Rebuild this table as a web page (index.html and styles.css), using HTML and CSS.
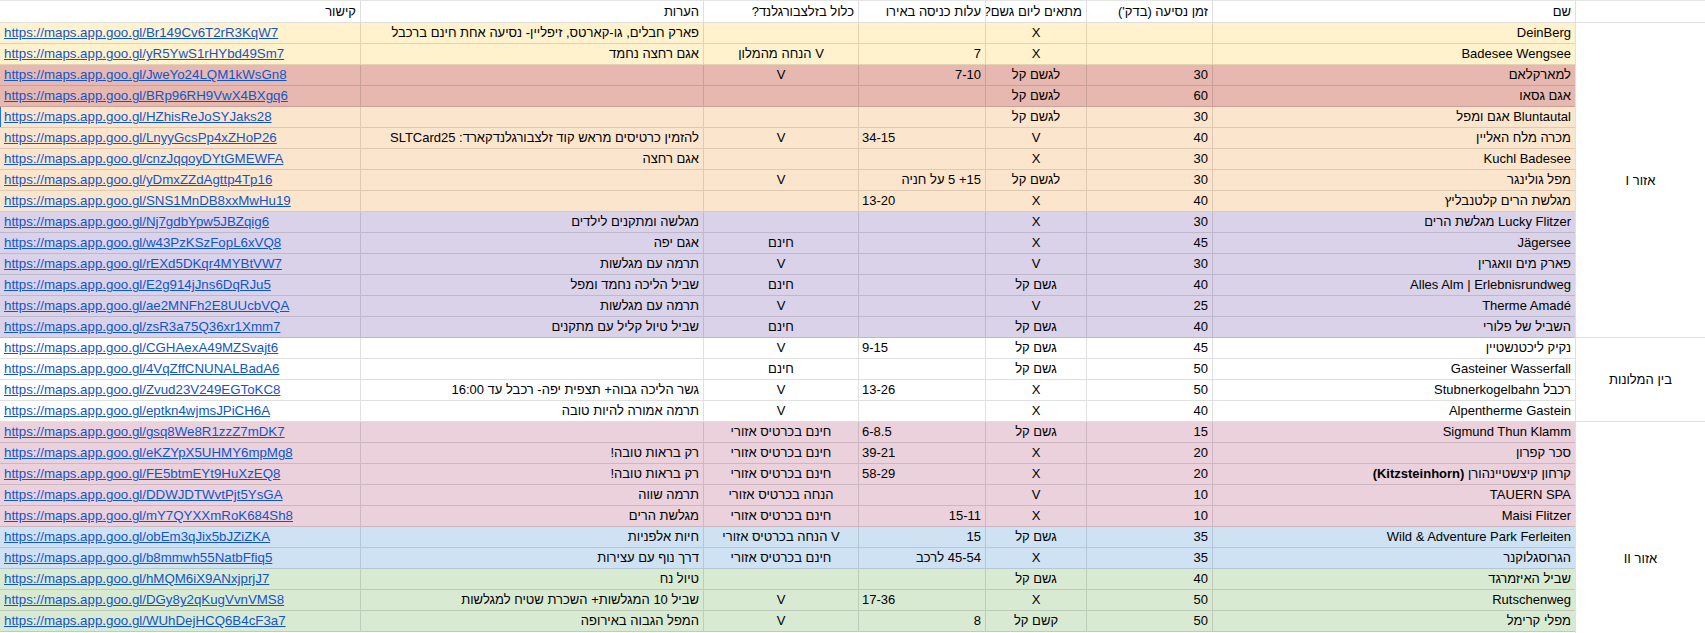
FILE: index.html
```html
<!DOCTYPE html>
<html lang="he" dir="rtl">
<head>
<meta charset="utf-8">
<title>אטרקציות</title>
<link rel="stylesheet" href="styles.css">
</head>
<body>
<div class="sheet">
  <div class="row head">
    <div class="c"></div>
    <div class="c">שם</div>
    <div class="c">זמן נסיעה (בדק')</div>
    <div class="c">מתאים ליום גשם?</div>
    <div class="c">עלות כניסה באירו</div>
    <div class="c">כלול בזלצבורגלנד?</div>
    <div class="c">הערות</div>
    <div class="c lk-h">קישור</div>
  </div>

  <div class="g span15">אזור I</div>
  <div class="row yellow">
    <div class="c">DeinBerg</div><div class="c"></div><div class="c ctr">X</div><div class="c"></div><div class="c ctr"></div><div class="c">פארק חבלים, גו-קארטס, זיפליין- נסיעה אחת חינם ברכבל</div><div class="c lk"><a href="#">https://maps.app.goo.gl/Br149Cv6T2rR3KqW7</a></div>
  </div>
  <div class="row yellow">
    <div class="c">Badesee Wengsee</div><div class="c"></div><div class="c ctr">X</div><div class="c">7</div><div class="c ctr">V הנחה מהמלון</div><div class="c">אגם רחצה נחמד</div><div class="c lk"><a href="#">https://maps.app.goo.gl/yR5YwS1rHYbd49Sm7</a></div>
  </div>
  <div class="row red">
    <div class="c">למארקלאם</div><div class="c">30</div><div class="c ctr">לגשם קל</div><div class="c">7-10</div><div class="c ctr">V</div><div class="c"></div><div class="c lk"><a href="#">https://maps.app.goo.gl/JweYo24LQM1kWsGn8</a></div>
  </div>
  <div class="row red">
    <div class="c">אגם גסאו</div><div class="c">60</div><div class="c ctr">לגשם קל</div><div class="c"></div><div class="c ctr"></div><div class="c"></div><div class="c lk"><a href="#">https://maps.app.goo.gl/BRp96RH9VwX4BXgq6</a></div>
  </div>
  <div class="row peach">
    <div class="c">Bluntautal אגם ומפל</div><div class="c">30</div><div class="c ctr">לגשם קל</div><div class="c"></div><div class="c ctr"></div><div class="c"></div><div class="c lk sel"><a href="#">https://maps.app.goo.gl/HZhisReJoSYJaks28</a></div>
  </div>
  <div class="row peach">
    <div class="c">מכרה מלח האליין</div><div class="c">40</div><div class="c ctr">V</div><div class="c l">34-15</div><div class="c ctr">V</div><div class="c">להזמין כרטיסים מראש קוד זלצבורגלנדקארד: SLTCard25</div><div class="c lk"><a href="#">https://maps.app.goo.gl/LnyyGcsPp4xZHoP26</a></div>
  </div>
  <div class="row peach">
    <div class="c">Kuchl Badesee</div><div class="c">30</div><div class="c ctr">X</div><div class="c"></div><div class="c ctr"></div><div class="c">אגם רחצה</div><div class="c lk"><a href="#">https://maps.app.goo.gl/cnzJqqoyDYtGMEWFA</a></div>
  </div>
  <div class="row peach">
    <div class="c">מפל גולינגר</div><div class="c">30</div><div class="c ctr">לגשם קל</div><div class="c">15+ 5 על חניה</div><div class="c ctr">V</div><div class="c"></div><div class="c lk"><a href="#">https://maps.app.goo.gl/yDmxZZdAgttp4Tp16</a></div>
  </div>
  <div class="row peach">
    <div class="c">מגלשת הרים קלטנבליץ</div><div class="c">40</div><div class="c ctr">X</div><div class="c l">13-20</div><div class="c ctr"></div><div class="c"></div><div class="c lk"><a href="#">https://maps.app.goo.gl/SNS1MnDB8xxMwHu19</a></div>
  </div>
  <div class="row purple">
    <div class="c">Lucky Flitzer מגלשת הרים</div><div class="c">30</div><div class="c ctr">X</div><div class="c"></div><div class="c ctr"></div><div class="c">מגלשה ומתקנים לילדים</div><div class="c lk"><a href="#">https://maps.app.goo.gl/Nj7gdbYpw5JBZqig6</a></div>
  </div>
  <div class="row purple">
    <div class="c">Jägersee</div><div class="c">45</div><div class="c ctr">X</div><div class="c"></div><div class="c ctr">חינם</div><div class="c">אגם יפה</div><div class="c lk"><a href="#">https://maps.app.goo.gl/w43PzKSzFopL6xVQ8</a></div>
  </div>
  <div class="row purple">
    <div class="c">פארק מים וואגרין</div><div class="c">30</div><div class="c ctr">V</div><div class="c"></div><div class="c ctr">V</div><div class="c">תרמה עם מגלשות</div><div class="c lk"><a href="#">https://maps.app.goo.gl/rEXd5DKqr4MYBtVW7</a></div>
  </div>
  <div class="row purple">
    <div class="c">Alles Alm | Erlebnisrundweg</div><div class="c">40</div><div class="c ctr">גשם קל</div><div class="c"></div><div class="c ctr">חינם</div><div class="c">שביל הליכה נחמד ומפל</div><div class="c lk"><a href="#">https://maps.app.goo.gl/E2g914jJns6DqRJu5</a></div>
  </div>
  <div class="row purple">
    <div class="c">Therme Amadé</div><div class="c">25</div><div class="c ctr">V</div><div class="c"></div><div class="c ctr">V</div><div class="c">תרמה עם מגלשות</div><div class="c lk"><a href="#">https://maps.app.goo.gl/ae2MNFh2E8UUcbVQA</a></div>
  </div>
  <div class="row purple">
    <div class="c">השביל של פלורי</div><div class="c">40</div><div class="c ctr">גשם קל</div><div class="c"></div><div class="c ctr">חינם</div><div class="c">שביל טיול קליל עם מתקנים</div><div class="c lk"><a href="#">https://maps.app.goo.gl/zsR3a75Q36xr1Xmm7</a></div>
  </div>

  <div class="g span4">בין המלונות</div>
  <div class="row white">
    <div class="c">נקיק ליכטנשטיין</div><div class="c">45</div><div class="c ctr">גשם קל</div><div class="c l">9-15</div><div class="c ctr">V</div><div class="c"></div><div class="c lk"><a href="#">https://maps.app.goo.gl/CGHAexA49MZSvajt6</a></div>
  </div>
  <div class="row white">
    <div class="c">Gasteiner Wasserfall</div><div class="c">50</div><div class="c ctr">גשם קל</div><div class="c"></div><div class="c ctr">חינם</div><div class="c"></div><div class="c lk"><a href="#">https://maps.app.goo.gl/4VqZffCNUNALBadA6</a></div>
  </div>
  <div class="row white">
    <div class="c">רכבל Stubnerkogelbahn</div><div class="c">50</div><div class="c ctr">X</div><div class="c l">13-26</div><div class="c ctr">V</div><div class="c">גשר הליכה גבוה+ תצפית יפה- רכבל עד 16:00</div><div class="c lk"><a href="#">https://maps.app.goo.gl/Zvud23V249EGToKC8</a></div>
  </div>
  <div class="row white">
    <div class="c">Alpentherme Gastein</div><div class="c">40</div><div class="c ctr">X</div><div class="c"></div><div class="c ctr">V</div><div class="c">תרמה אמורה להיות טובה</div><div class="c lk"><a href="#">https://maps.app.goo.gl/eptkn4wjmsJPiCH6A</a></div>
  </div>

  <div class="g span13">אזור II</div>
  <div class="row pink">
    <div class="c">Sigmund Thun Klamm</div><div class="c">15</div><div class="c ctr">גשם קל</div><div class="c l">6-8.5</div><div class="c ctr">חינם בכרטיס אזורי</div><div class="c"></div><div class="c lk"><a href="#">https://maps.app.goo.gl/gsq8We8R1zzZ7mDK7</a></div>
  </div>
  <div class="row pink">
    <div class="c">סכר קפרון</div><div class="c">20</div><div class="c ctr">X</div><div class="c l">39-21</div><div class="c ctr">חינם בכרטיס אזורי</div><div class="c">רק בראות טובה!</div><div class="c lk"><a href="#">https://maps.app.goo.gl/eKZYpX5UHMY6mpMg8</a></div>
  </div>
  <div class="row pink">
    <div class="c">קרחון קיצשטיינהורן <b>(Kitzsteinhorn)</b></div><div class="c">20</div><div class="c ctr">X</div><div class="c l">58-29</div><div class="c ctr">חינם בכרטיס אזורי</div><div class="c">רק בראות טובה!</div><div class="c lk"><a href="#">https://maps.app.goo.gl/FE5btmEYt9HuXzEQ8</a></div>
  </div>
  <div class="row pink">
    <div class="c">TAUERN SPA</div><div class="c">10</div><div class="c ctr">V</div><div class="c"></div><div class="c ctr">הנחה בכרטיס אזורי</div><div class="c">תרמה שווה</div><div class="c lk"><a href="#">https://maps.app.goo.gl/DDWJDTWvtPjt5YsGA</a></div>
  </div>
  <div class="row pink">
    <div class="c">Maisi Flitzer</div><div class="c">10</div><div class="c ctr">X</div><div class="c">15-11</div><div class="c ctr">חינם בכרטיס אזורי</div><div class="c">מגלשת הרים</div><div class="c lk"><a href="#">https://maps.app.goo.gl/mY7QYXXmRoK684Sh8</a></div>
  </div>
  <div class="row blue">
    <div class="c">Wild &amp; Adventure Park Ferleiten</div><div class="c">35</div><div class="c ctr">גשם קל</div><div class="c">15</div><div class="c ctr">V הנחה בכרטיס אזורי</div><div class="c">חיות אלפניות</div><div class="c lk"><a href="#">https://maps.app.goo.gl/obEm3qJix5bJZiZKA</a></div>
  </div>
  <div class="row blue">
    <div class="c">הגרוסגלוקנר</div><div class="c">35</div><div class="c ctr">X</div><div class="c">45-54 לרכב</div><div class="c ctr">חינם בכרטיס אזורי</div><div class="c">דרך נוף עם עצירות</div><div class="c lk"><a href="#">https://maps.app.goo.gl/b8mmwh55NatbFfiq5</a></div>
  </div>
  <div class="row green">
    <div class="c">שביל האיזמרגד</div><div class="c">40</div><div class="c ctr">גשם קל</div><div class="c"></div><div class="c ctr"></div><div class="c">טיול נח</div><div class="c lk"><a href="#">https://maps.app.goo.gl/hMQM6iX9ANxjprjJ7</a></div>
  </div>
  <div class="row green">
    <div class="c">Rutschenweg</div><div class="c">50</div><div class="c ctr">X</div><div class="c l">17-36</div><div class="c ctr">V</div><div class="c">שביל 10 המגלשות+ השכרת שטיח למגלשות</div><div class="c lk"><a href="#">https://maps.app.goo.gl/DGy8y2qKugVvnVMS8</a></div>
  </div>
  <div class="row green">
    <div class="c">מפלי קרימל</div><div class="c">50</div><div class="c ctr">קשם קל</div><div class="c">8</div><div class="c ctr">V</div><div class="c">המפל הגבוה באירופה</div><div class="c lk"><a href="#">https://maps.app.goo.gl/WUhDejHCQ6B4cF3a7</a></div>
  </div>
</div>
</body>
</html>
```

FILE: styles.css
```css
html, body {
  margin: 0;
  padding: 0;
  background: #ffffff;
}

body {
  font-family: "Liberation Sans", Arial, sans-serif;
  font-size: 13px;
  color: #000000;
  overflow: hidden;
}

.sheet {
  direction: rtl;
  display: grid;
  grid-template-columns: 130px 363px 126px 101px 127px 155px 343px 360px;
  grid-template-rows: 23px;
  grid-auto-rows: 21px;
  height: 633px;
  overflow: hidden;
}

.row {
  display: contents;
}

.c {
  box-sizing: border-box;
  min-width: 0;
  padding: 0 4px;
  line-height: 20px;
  white-space: nowrap;
  overflow: hidden;
  text-align: right;
  border-bottom: 1px solid rgba(0, 0, 0, 0.12);
  border-left: 1px solid rgba(0, 0, 0, 0.12);
}

.head .c {
  background: #ffffff;
  border-top: 1px solid rgba(0, 0, 0, 0.1);
  line-height: 21px;
}

.ctr {
  text-align: center;
}

.l {
  text-align: left;
  padding-left: 3px;
}

.lk,
.lk-h {
  border-left: none;
}

.lk {
  direction: ltr;
  text-align: left;
  padding-left: 4px;
}

.lk a {
  color: #1155cc;
  text-decoration: underline;
  font-size: 13.3px;
}

.sel {
  box-shadow: inset 1px 0 0 #1a73e8;
}

.g {
  box-sizing: border-box;
  background: #ffffff;
  border-bottom: 1px solid rgba(0, 0, 0, 0.12);
  border-left: 1px solid rgba(0, 0, 0, 0.12);
  display: flex;
  align-items: center;
  justify-content: center;
  white-space: nowrap;
}

.span15 { grid-row: span 15; }
.span4 { grid-row: span 4; }
.span13 { grid-row: span 13; }

.yellow .c { background: #fff2cc; }
.red .c { background: #e6b8af; }
.peach .c { background: #fce5cd; }
.purple .c { background: #d9d2e9; }
.white .c { background: #ffffff; }
.pink .c { background: #ead1dc; }
.blue .c { background: #cfe2f3; }
.green .c { background: #d9ead3; }
```
